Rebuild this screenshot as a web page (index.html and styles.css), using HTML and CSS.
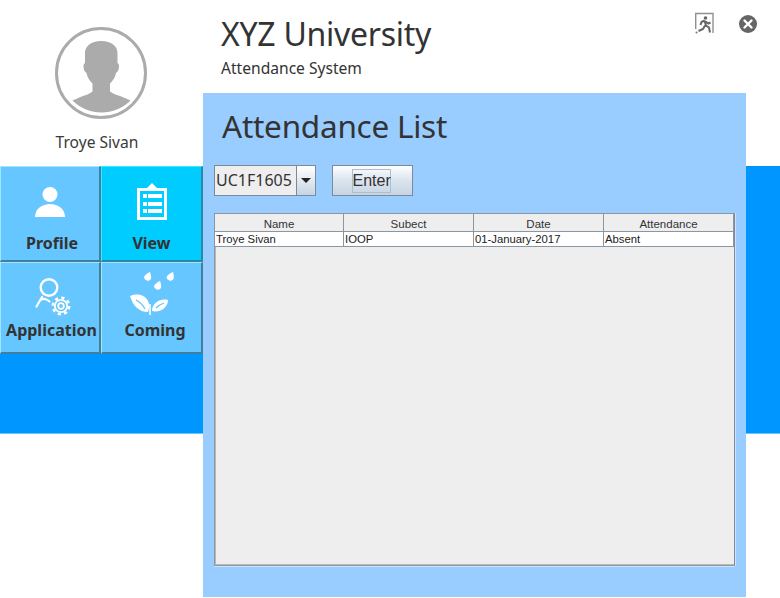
FILE: index.html
```html
<!DOCTYPE html>
<html lang="en">
<head>
<meta charset="utf-8">
<title>Attendance List</title>
<link rel="stylesheet" href="styles.css">
</head>
<body>
<div class="app">
  <div class="band"></div>
  <aside class="side">
    <div class="user">
      <svg class="avatar" viewBox="0 0 92 92" width="92" height="92">
        <circle cx="46" cy="46" r="44.500" fill="#fff" stroke="#ababab" stroke-width="3"/>
        <path fill="#ababab" d="M46 14c-10 0-16 5-16 12v10c-1.500 1-1.500 2-1.500 4 0 3 1.500 5 3 6 1 5 3.500 8 6 10.500v8c-3 2.500-8 4-12 5.500l-8 3.500c8 8 18.500 12 29 12s21-4 29-12l-8-3.500c-4-1.500-9-3-12.500-5.500v-8c2.500-2.500 5-5.500 6-10.500 1.500-1 3-3 3-6 0-2 0-3-1.500-4V26c0-7-6-12-16.500-12z"/>
      </svg>
      <div class="user-name">Troye Sivan</div>
    </div>
    <nav class="tiles">
      <a class="tile tile-upper tile-profile">
        <svg class="ico ico-profile" viewBox="0 0 30 31" width="30" height="31"><circle cx="15" cy="7.500" r="7.500" fill="#fff"/><path fill="#fff" d="M0 30c0-8 7-13 15-13s15 5 15 13z"/></svg>
        <span class="tile-label">Profile</span>
      </a>
      <a class="tile tile-upper tile-active">
        <svg class="ico ico-view" viewBox="0 0 30 37" width="30" height="37"><path fill="#fff" fill-rule="evenodd" d="M0 5h10l5-5 5 5h10v32H0zM3 8v26h24V8z"/><path fill="#fff" d="M6 11h4v4H6zM11 11h14v4H11zM6 19h4v4H6zM11 19h14v4H11zM6 26h4v4H6zM11 26h14v4H11z"/></svg>
        <span class="tile-label">View</span>
      </a>
      <a class="tile tile-lower tile-app">
        <svg class="ico ico-app" viewBox="0 0 36 38" width="36" height="38"><circle cx="14" cy="9.500" r="8.300" fill="none" stroke="#fff" stroke-width="2.400"/><path fill="none" stroke="#fff" stroke-width="2.200" stroke-linecap="round" d="M7 19L1.500 28.500M5.500 22c3-2 6-1 9 1.500"/><circle cx="26" cy="28" r="2.800" fill="none" stroke="#fff" stroke-width="1.800"/><circle cx="26" cy="28" r="6.200" fill="none" stroke="#fff" stroke-width="1.800"/><circle cx="26" cy="28" r="8.200" fill="none" stroke="#fff" stroke-width="2.600" stroke-dasharray="3.200 3.240"/></svg>
        <span class="tile-label">Application</span>
      </a>
      <a class="tile tile-lower tile-coming">
        <svg class="ico ico-coming" viewBox="0 0 44 43" width="44" height="43"><path fill="#fff" d="M20 0c1 3 1.500 5 1 7a3.800 3.800 0 0 1-7-2c1-2 3-4 6-5zM30 9c1 3 1.500 5 1 7a3.800 3.800 0 0 1-7-2c1-2 3-4 6-5zM43 0c1 3 1 5 .5 7a3.800 3.800 0 0 1-7-2c1-2 3.500-4 6.500-5z"/><path fill="#fff" d="M0 24c8-3 15-1 18 5 2 4 1 8 0 11-9 0-15-6-18-16zM22 39c0-7 7-13 16-11 0 7-7 13-16 11z"/><path fill="none" stroke="#fff" stroke-width="1.600" d="M20 32v11"/><path fill="none" stroke="#66c6ff" stroke-width="1.300" d="M6 28c4 2 7 5 9 9M26 36c2-2 5-4 8-5"/></svg>
        <span class="tile-label">Coming</span>
      </a>
    </nav>
  </aside>
  <main class="main">
    <header class="top">
      <div class="brand">
        <h1 class="brand-title">XYZ University</h1>
        <div class="brand-sub">Attendance System</div>
      </div>
      <div class="actions">
        <svg class="exit" viewBox="0 0 20 22" width="20" height="22"><path fill="none" stroke="#909090" stroke-width="1.400" d="M.7 17V1.500h17.300V21"/><circle cx="10.500" cy="6" r="1.800" fill="#666"/><path fill="none" stroke="#666" stroke-width="2" d="M9.500 8.500l-3 1.500-1 3M9.500 8.500l1.500 5 3 2 1 5M10 13.500l-2 3.500-4.500 2M10.500 9.500l3 2 2-1"/><circle cx="1.500" cy="20.500" r="1" fill="#777"/></svg>
        <svg class="close" viewBox="0 0 18 18" width="18" height="18"><circle cx="9" cy="9" r="9" fill="#666"/><path stroke="#fff" stroke-width="2.400" stroke-linecap="round" d="M5.500 5.500l7 7M12.500 5.500l-7 7"/></svg>
      </div>
    </header>
    <section class="panel">
      <h2 class="panel-title">Attendance List</h2>
      <div class="controls">
        <div class="combo">
          <span class="combo-value">UC1F1605</span>
          <span class="combo-arrow"><i class="caret"></i></span>
        </div>
        <button class="enter" type="button"><span class="enter-focus">Enter</span></button>
      </div>
      <div class="table-wrap">
        <table class="table">
          <thead>
            <tr><th class="col col-first">Name</th><th class="col">Subect</th><th class="col">Date</th><th>Attendance</th></tr>
          </thead>
          <tbody>
            <tr><td>Troye Sivan</td><td>IOOP</td><td>01-January-2017</td><td>Absent</td></tr>
          </tbody>
        </table>
      </div>
    </section>
  </main>
</div>
</body>
</html>
```
FILE: styles.css
```css
* { box-sizing: border-box; }
html, body { margin: 0; padding: 0; background: #fff; }
body { width: 780px; height: 598px; overflow: hidden; font-family: "Noto Sans", "Open Sans", sans-serif; color: #333; }
.app { position: relative; display: flex; width: 780px; height: 598px; }
.band { position: absolute; left: 0; right: 0; top: 166px; height: 268px; background: #0096ff; border-bottom: 1px solid #66c6ff; }
.side { position: relative; width: 203px; flex: none; }
.user { height: 166px; display: flex; flex-direction: column; align-items: center; padding: 27px 9px 0 0; }
.avatar { display: block; margin-left: 8px; flex: none; }
.user-name { margin-top: 12px; font-size: 15.600px; line-height: 22px; color: #3a3a3a; }
.tiles { display: grid; grid-template-columns: 101px 102px; grid-template-rows: 96px 92px; }
.tile { display: flex; flex-direction: column; align-items: center; background: #66c6ff; border-style: solid; border-width: 1px 2px 2px 1px; border-color: #9fe6ff #417f9c #417f9c #9fe6ff; }
.tile-upper { padding-bottom: 6px; }
.tile-lower { padding-bottom: 11px; }
.tile-active { background: #00ccff; border-color: #33eeff #2f86a6 #2f86a6 #33eeff; }
.tile .ico { display: block; flex: none; }
.ico-profile { margin-top: 20px; }
.ico-view { margin-top: 16px; }
.ico-app { margin-top: 15px; margin-left: 6px; }
.ico-coming { margin-top: 9px; }
.tile-label { font-weight: 700; font-size: 16px; line-height: 22px; color: #333; margin-top: auto; white-space: nowrap; }
.tile-profile .tile-label { margin-left: 4px; }
.tile-app .tile-label { margin-left: 3px; }
.tile-coming .tile-label { margin-left: 7px; }
.main { position: relative; width: 543px; flex: none; display: flex; flex-direction: column; }
.top { height: 93px; display: flex; justify-content: space-between; padding: 13px 22px 0 18px; }
.brand-title { margin: 0; font-weight: 400; font-size: 32px; letter-spacing: -0.27px; line-height: 42px; color: #333; }
.brand-sub { font-size: 15.600px; line-height: 22px; margin-top: 2px; color: #333; }
.actions { position: absolute; right: -11px; top: 13px; display: flex; align-items: flex-start; gap: 24px; }
.exit { margin-top: -1px; }
.close { margin-top: 2px; }
.panel { flex: none; height: 504px; background: #99ccff; padding: 12px 12px 0 11px; position: relative; }
.panel-title { margin: 0 0 0 8px; font-weight: 400; font-size: 31.500px; letter-spacing: -0.25px; line-height: 42px; color: #333; }
.controls { display: flex; gap: 16px; margin-top: 18px; height: 31px; }
.combo { display: flex; width: 102px; height: 31px; border: 1px solid #7a8a99; background: #eee; }
.combo-value { flex: 1; font-size: 16px; line-height: 29px; padding-left: 1px; color: #333; }
.combo-arrow { width: 19px; display: flex; align-items: center; justify-content: center; border-left: 1px solid #7a8a99; background: linear-gradient(#fff, #c6d4e2); }
.caret { border: 5px solid transparent; border-top: 5px solid #222; border-bottom: 0; }
.enter { width: 81px; height: 31px; padding: 0; border: 1px solid #7a8a99; background: linear-gradient(#fff 0%, #dde6f0 45%, #c6d4e2 100%); display: flex; align-items: center; justify-content: center; }
.enter-focus { display: block; width: 39px; height: 24px; margin-right: 3px; border: 1px solid #a8bfd4; font-family: inherit; font-size: 16px; line-height: 22px; color: #333; }
.table-wrap { margin-top: 17px; width: 521px; height: 353px; background: #eee; border: 1px solid; border-color: #8a97a3 #7f8a94 #8f9aa3 #8a97a3; box-shadow: 0 1px 0 #c8e2ff, 1px 0 0 #c8e2ff, inset 1px 0 0 #b8b8b8, inset 0 -1px 0 #b8b8b8; }
.table { border-collapse: separate; border-spacing: 0; table-layout: fixed; width: 519px; font-family: "Liberation Sans", sans-serif; font-size: 11.500px; color: #222; }
.table .col { width: 130px; }
.table .col-first { width: 129px; }
.table th { height: 18px; padding: 2px 0 0; font-weight: 400; text-align: center; background: #eee; border-right: 1px solid #8a97a3; border-bottom: 1px solid #8a97a3; color: #333; }
.table td { height: 15px; padding: 0 1px; background: #fff; border-right: 1px solid #8a97a3; border-bottom: 1px solid #8a97a3; line-height: 13px; font-size: 11.300px; }
```
